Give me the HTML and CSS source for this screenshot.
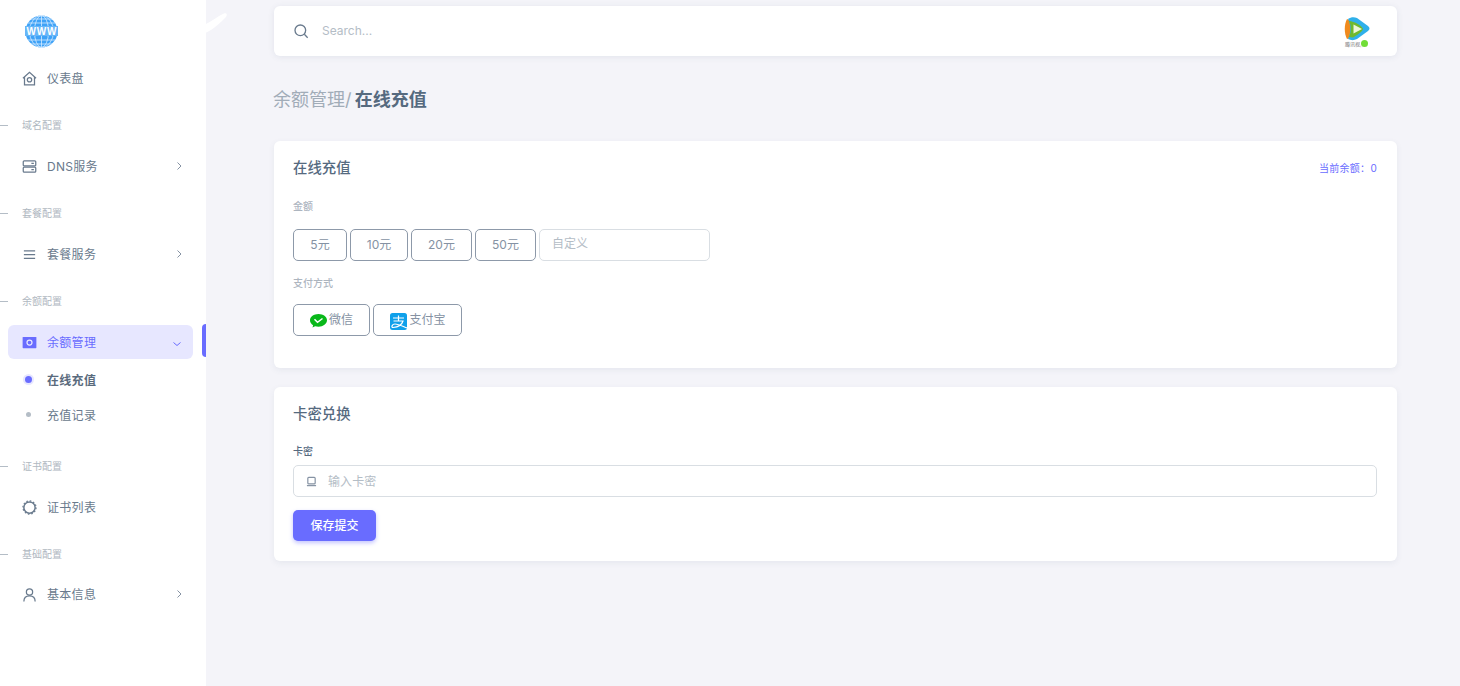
FILE: index.html
```html
<!DOCTYPE html>
<html lang="zh">
<head>
<meta charset="utf-8">
<title>在线充值</title>
<link rel="stylesheet" href="styles.css">
</head>
<body>
<div class="layout">
  <aside class="sidebar">
    <div class="logo">
      <svg width="33" height="33" viewBox="0 0 33 33">
        <circle cx="16.500" cy="16.500" r="16" fill="#3ea2f7"/>
        <g fill="none" stroke="#d5ebff" stroke-width=".8">
          <ellipse cx="16.500" cy="16.500" rx="7" ry="16"/>
          <ellipse cx="16.500" cy="16.500" rx="12" ry="16"/>
          <path d="M16.500 0v33M6 4h21M3 8h27M3 25h27M6 29h21"/>
        </g>
        <rect x="0" y="11" width="33" height="10" fill="#67b6f8"/>
        <text class="logo-text" x="16.500" y="19.500" text-anchor="middle" textLength="30">WWW</text>
      </svg>
    </div>
    <nav class="nav">
      <a class="item">
        <svg class="ico" viewBox="0 0 24 24"><path d="M1.500 11.500L12 2l10.500 9.500M4 10v12h16V10"/><circle cx="12" cy="14" r="3.500"/></svg>
        <span class="item-text">仪表盘</span>
      </a>
      <div class="section">域名配置</div>
      <a class="item">
        <svg class="ico" viewBox="0 0 24 24"><rect x="2" y="3" width="20" height="8" rx="1.500"/><rect x="2" y="13" width="20" height="8" rx="1.500"/><path d="M15 7h4M15 17h4"/></svg>
        <span class="item-text">DNS服务</span>
        <svg class="arrow" viewBox="0 0 10 10"><path d="M3.500 1.500L7 5 3.500 8.500"/></svg>
      </a>
      <div class="section">套餐配置</div>
      <a class="item">
        <svg class="ico" viewBox="0 0 24 24"><path d="M3 6h18M3 12h18M3 18h18"/></svg>
        <span class="item-text">套餐服务</span>
        <svg class="arrow" viewBox="0 0 10 10"><path d="M3.500 1.500L7 5 3.500 8.500"/></svg>
      </a>
      <div class="section">余额配置</div>
      <a class="item active">
        <svg class="ico" viewBox="0 0 24 24"><rect x="1" y="3" width="22" height="18" rx="1" fill="#696cff"/><circle cx="12" cy="12" r="4" stroke="#e7e7ff" stroke-width="2"/></svg>
        <span class="item-text">余额管理</span>
        <svg class="arrow arrow-down" viewBox="0 0 10 10"><path d="M1.500 3.500L5 6.500l3.500-3"/></svg>
        <span class="indicator"></span>
      </a>
      <a class="sub current"><span class="dot"></span>在线充值</a>
      <a class="sub"><span class="dot"></span>充值记录</a>
      <div class="section section-after-sub">证书配置</div>
      <a class="item">
        <svg class="ico" viewBox="0 0 24 24"><circle cx="12" cy="12" r="9" stroke-width="2.400"/><circle cx="12" cy="12" r="10.500" stroke-width="2" stroke-dasharray="2.500 3"/></svg>
        <span class="item-text">证书列表</span>
      </a>
      <div class="section section-last">基础配置</div>
      <a class="item">
        <svg class="ico" viewBox="0 0 24 24"><circle cx="12" cy="8" r="5"/><path d="M3 23c0-6 4-9 9-9s9 3 9 9"/></svg>
        <span class="item-text">基本信息</span>
        <svg class="arrow" viewBox="0 0 10 10"><path d="M3.500 1.500L7 5 3.500 8.500"/></svg>
      </a>
    </nav>
    <svg class="swoosh" width="24" height="30" viewBox="0 0 24 30"><path d="M0 19.500C7 16 13 11 19 8.500c3-1 3.500 1.500 2 3.500C16 17 8 25 0 28z" fill="#fff"/></svg>
  </aside>
  <main class="main">
    <header class="topbar">
      <svg class="search-ico" viewBox="0 0 24 24"><circle cx="11" cy="11" r="8"/><path d="M17 17l5 5"/></svg>
      <span class="search-text">Search...</span>
      <div class="avatar">
        <svg width="28" height="32" viewBox="0 0 28 32">
          <path d="M4 3C1 9 1 17 4 23l6-2V6z" fill="#f08a1d"/>
          <path d="M5 3c3-2 6-2 9-1l11 8c2 1.500 2 3.500 0 5L14 23c-3 1.500-6 1.500-9 0 3-6 3-14 0-20z" fill="#2fb0ea"/>
          <path d="M6 5c2.500 5 2.500 11 0 16l4 .5c2-1 10-6 10-8.500S11 5 6 5z" fill="#6fb92e"/>
          <path d="M10.500 8.500l8.500 4.500-8.500 4.500z" fill="#eef6d8"/>
          <text class="avatar-text" x="2" y="30">腾讯视频</text>
        </svg>
        <span class="status"></span>
      </div>
    </header>
    <h1 class="crumb"><span class="crumb-parent">余额管理/</span> 在线充值</h1>
    <section class="card card-pay">
      <div class="card-head">
        <h2 class="card-title">在线充值</h2>
        <span class="balance">当前余额：0</span>
      </div>
      <div class="label label-amount">金额</div>
      <div class="btn-row">
        <button class="opt opt-5">5元</button>
        <button class="opt opt-10">10元</button>
        <button class="opt opt-20">20元</button>
        <button class="opt opt-20">50元</button>
        <div class="custom">自定义</div>
      </div>
      <div class="label label-method">支付方式</div>
      <div class="btn-row">
        <button class="opt opt-wx">
          <svg class="pay-ico" width="17" height="14" viewBox="0 0 17 14"><path d="M8.500 0C3.800 0 0 2.800 0 6.300c0 2 1.200 3.700 3.100 4.900l-.6 2.300 2.600-1.300c1.100.3 2.200.5 3.400.5 4.700 0 8.500-2.900 8.500-6.400S13.200 0 8.500 0z" fill="#09b81a"/><path d="M4.500 5.300l3 3 5-3.800" fill="none" stroke="#fff" stroke-width="1.500"/></svg>
          微信
        </button>
        <button class="opt opt-ali">
          <svg class="pay-ico" width="17" height="17" viewBox="0 0 17 17"><rect width="17" height="17" rx="2.500" fill="#0fa0ea"/><path d="M3 5h11M8.500 2.500V8M3.500 8h9.500c-1 3.500-4 6-10 6.500C1 14.500 2 11 5 11c3 0 7 2 12 4" fill="none" stroke="#fff" stroke-width="1.200"/></svg>
          支付宝
        </button>
      </div>
    </section>
    <section class="card card-redeem">
      <h2 class="card-title">卡密兑换</h2>
      <div class="label label-card">卡密</div>
      <div class="field">
        <svg class="field-ico" viewBox="0 0 12 12"><rect x="2" y="1.500" width="8" height="7" rx="1"/><path d="M1 10.500h10"/></svg>
        <span class="field-text">输入卡密</span>
      </div>
      <button class="submit">保存提交</button>
    </section>
  </main>
</div>
</body>
</html>
```
FILE: styles.css
```css
* { box-sizing: border-box; }
html, body { margin: 0; padding: 0; height: 100%; overflow: hidden; }
body {
  background: #f4f4f9;
  color: #697a8d;
  font-family: Inter, "Noto Sans CJK SC", sans-serif;
  font-size: 12px;
}
svg { display: block; flex: none; }
.layout { display: flex; height: 686px; }
.sidebar {
  width: 206px;
  flex: none;
  background: #fff;
  position: relative;
  padding-top: 15px;
}
.logo { padding-left: 25px; height: 33px; margin-bottom: 13px; }
.logo-text { font-size: 10px; font-weight: 700; fill: #fff; font-family: "Liberation Sans", sans-serif; }
.nav { display: flex; flex-direction: column; }
.item {
  position: relative;
  display: flex;
  align-items: center;
  height: 34px;
  margin: 0 13px 0 8px;
  padding: 0 9px 0 14px;
  border-radius: 6px;
  font-size: 12px;
}
.ico {
  width: 15px;
  height: 15px;
  fill: none;
  stroke: #697a8d;
  stroke-width: 2;
  margin-right: 10px;
}
.item-text { flex: 1; letter-spacing: .3px; padding-bottom: 2px; }
.arrow { width: 10px; height: 10px; fill: none; stroke: #8592a3; stroke-width: 1; }
.item.active { background: #e7e7ff; color: #696cff; }
.item.active .ico { stroke: none; }
.item.active .ico circle { stroke: #e7e7ff; fill: none; }
.item.active .arrow { stroke: #696cff; }
.arrow-down { margin-top: 3px; margin-right: 2px; }
.indicator {
  position: absolute;
  left: 194px;
  top: -1px;
  width: 4px;
  height: 33px;
  background: #696cff;
  border-radius: 4px 0 0 4px;
}
.section {
  position: relative;
  height: 20px;
  line-height: 20px;
  margin: 20px 0 14px;
  padding-left: 22px;
  font-size: 10px;
  color: #b0b8c1;
}
.section::before {
  content: "";
  position: absolute;
  left: 0;
  top: 10px;
  width: 8px;
  height: 1px;
  background: #b4bdc6;
}
.section-after-sub { margin: 24px 0 14px; }
.section-last { margin: 20px 0 13px; }
.sub {
  display: flex;
  align-items: center;
  height: 35px;
  padding-left: 26px;
  font-size: 12px;
  letter-spacing: .3px;
}
.sub.current { margin-top: 3px; font-weight: 700; color: #5a6b7d; }
.dot {
  width: 5px;
  height: 5px;
  border-radius: 50%;
  background: #b4bdc6;
  margin-right: 16px;
}
.current .dot {
  width: 7px;
  height: 7px;
  margin: 0 15px 0 0;
  margin-left: -1px;
  background: #696cff;
  box-shadow: 0 0 0 2px #e7e7ff;
}
.swoosh { position: absolute; left: 205px; top: 5px; }
.main {
  flex: 1;
  min-width: 0;
  padding: 6px 63px 0 68px;
}
.topbar {
  height: 50px;
  background: #fff;
  border-radius: 6px;
  box-shadow: 0 1px 6px rgba(67, 89, 113, .1);
  display: flex;
  align-items: center;
  padding: 0 28px 0 19px;
}
.search-ico { width: 16px; height: 16px; fill: none; stroke: #697a8d; stroke-width: 2; margin-right: 13px; }
.search-text { flex: 1; font-size: 12px; color: #b4bdc6; padding-bottom: 2px; }
.avatar { position: relative; width: 26px; height: 32px; margin-top: 1px; }
.avatar-text { font-size: 5px; fill: #777; }
.status {
  position: absolute;
  right: 1px;
  bottom: 1px;
  width: 7px;
  height: 7px;
  border-radius: 50%;
  background: #71dd37;
  box-shadow: 0 0 0 1px #fff;
}
.crumb {
  margin: 30px 0 28px;
  height: 27px;
  line-height: 27px;
  font-size: 18px;
  font-weight: 700;
  color: #566a7f;
}
.crumb-parent { font-weight: 400; color: #a1acb8; margin-right: -1px; margin-left: -1px; }
.card {
  background: #fff;
  border-radius: 6px;
  box-shadow: 0 2px 6px rgba(67, 89, 113, .08);
  padding: 0 20px 0 19px;
}
.card-pay { height: 227px; margin-bottom: 19px; padding-top: 16px; }
.card-redeem { height: 174px; padding-top: 16px; }
.card-head { display: flex; justify-content: space-between; align-items: center; }
.card-title {
  margin: 0;
  font-size: 14.4px;
  line-height: 21px;
  font-weight: 500;
  color: #566a7f;
}
.balance { font-size: 10px; color: #696cff; letter-spacing: .3px; }
.label { font-size: 10px; line-height: 14px; font-weight: 500; color: #adb5bf; }
.label-amount { margin: 21px 0 16px; }
.label-method { margin: 15px 0 14px; }
.label-card { margin: 20px 0 7px; color: #566a7f; }
.btn-row { display: flex; gap: 3px; align-items: flex-start; }
.opt {
  display: flex;
  align-items: center;
  justify-content: center;
  gap: 2px;
  height: 32px;
  padding: 0 0 4px;
  background: #fff;
  border: 1px solid #8d99a9;
  border-radius: 5px;
  font: inherit;
  font-size: 12px;
  color: #8592a3;
}
.pay-ico { margin-top: 6px; }
.opt-5 { width: 54px; }
.opt-10 { width: 58px; }
.opt-20 { width: 61px; }
.opt-wx { width: 77px; }
.opt-ali { width: 89px; padding-left: 1px; }
.custom {
  width: 171px;
  height: 32px;
  border: 1px solid #d9dee3;
  border-radius: 5px;
  padding-left: 12px;
  line-height: 27px;
  font-size: 12px;
  color: #b4bdc6;
}
.field {
  display: flex;
  align-items: center;
  height: 32px;
  border: 1px solid #d9dee3;
  border-radius: 5px;
  padding-left: 12px;
}
.field-ico { width: 11px; height: 11px; fill: none; stroke: #8592a3; stroke-width: 1.300; margin-right: 11px; }
.field-text { font-size: 12px; color: #b4bdc6; padding-bottom: 2px; letter-spacing: .1px; }
.submit {
  display: block;
  width: 83px;
  height: 31px;
  margin-top: 13px;
  padding: 0 0 2px;
  border: 0;
  border-radius: 5px;
  background: #696cff;
  box-shadow: 0 2px 4px rgba(105, 108, 255, .4);
  color: #fff;
  font: inherit;
  font-size: 12px;
  font-weight: 500;
}
```
